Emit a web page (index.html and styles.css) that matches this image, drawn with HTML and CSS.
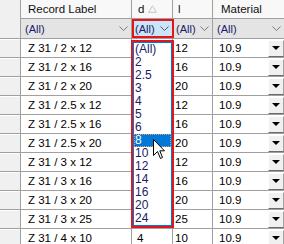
FILE: index.html
```html
<!DOCTYPE html>
<html>
<head>
<meta charset="utf-8">
<link rel="stylesheet" href="styles.css">
</head>
<body>
<div class="wrap">
  <div class="grid">
    <div class="corner"></div>
    <div class="hdr lbl">Record Label</div>
    <div class="hdr d">d <svg class="sort" width="9" height="8" viewBox="0 0 9 8"><path d="M4.5 0.8 L8.3 7.3 L0.7 7.3 Z" fill="none" stroke="#c4c4c4" stroke-width="1"/></svg></div>
    <div class="hdr l">l</div>
    <div class="hdr mat">Material</div>

    <div class="flt lbl"><span>(All)</span><svg class="chev" width="9" height="5" viewBox="0 0 9 5"><path d="M0.5 0.5 L4.5 4.5 L8.5 0.5" fill="none" stroke="#7a7a7a"/></svg></div>
    <div class="flt d active"><span>(All)</span><svg class="chev" width="9" height="5" viewBox="0 0 9 5"><path d="M0.5 0.5 L4.5 4.5 L8.5 0.5" fill="none" stroke="#5a5a5a"/></svg></div>
    <div class="flt l"><span>(All)</span><svg class="chev" width="9" height="5" viewBox="0 0 9 5"><path d="M0.5 0.5 L4.5 4.5 L8.5 0.5" fill="none" stroke="#7a7a7a"/></svg></div>
    <div class="flt mat"><span>(All)</span><svg class="chev" width="9" height="5" viewBox="0 0 9 5"><path d="M0.5 0.5 L4.5 4.5 L8.5 0.5" fill="none" stroke="#7a7a7a"/></svg></div>

    <div class="rh"></div><div class="c lbl">Z 31 / 2 x 12</div><div class="c d"></div><div class="c l">12</div><div class="c mat">10.9<span class="btn"><i></i></span></div>
    <div class="rh"></div><div class="c lbl">Z 31 / 2 x 16</div><div class="c d"></div><div class="c l">16</div><div class="c mat">10.9<span class="btn"><i></i></span></div>
    <div class="rh"></div><div class="c lbl">Z 31 / 2 x 20</div><div class="c d"></div><div class="c l">20</div><div class="c mat">10.9<span class="btn"><i></i></span></div>
    <div class="rh"></div><div class="c lbl">Z 31 / 2.5 x 12</div><div class="c d"></div><div class="c l">12</div><div class="c mat">10.9<span class="btn"><i></i></span></div>
    <div class="rh"></div><div class="c lbl">Z 31 / 2.5 x 16</div><div class="c d"></div><div class="c l">16</div><div class="c mat">10.9<span class="btn"><i></i></span></div>
    <div class="rh"></div><div class="c lbl">Z 31 / 2.5 x 20</div><div class="c d"></div><div class="c l">20</div><div class="c mat">10.9<span class="btn"><i></i></span></div>
    <div class="rh"></div><div class="c lbl">Z 31 / 3 x 12</div><div class="c d"></div><div class="c l">12</div><div class="c mat">10.9<span class="btn"><i></i></span></div>
    <div class="rh"></div><div class="c lbl">Z 31 / 3 x 16</div><div class="c d"></div><div class="c l">16</div><div class="c mat">10.9<span class="btn"><i></i></span></div>
    <div class="rh"></div><div class="c lbl">Z 31 / 3 x 20</div><div class="c d"></div><div class="c l">20</div><div class="c mat">10.9<span class="btn"><i></i></span></div>
    <div class="rh"></div><div class="c lbl">Z 31 / 3 x 25</div><div class="c d"></div><div class="c l">25</div><div class="c mat">10.9<span class="btn"><i></i></span></div>
    <div class="rh"></div><div class="c lbl">Z 31 / 4 x 10</div><div class="c d">4</div><div class="c l">10</div><div class="c mat">10.9<span class="btn"><i></i></span></div>
  </div>

  <div class="hilite"></div>

  <ul class="list">
    <li>(All)</li>
    <li>2</li>
    <li>2.5</li>
    <li>3</li>
    <li>4</li>
    <li>5</li>
    <li>6</li>
    <li class="sel">8</li>
    <li>10</li>
    <li>12</li>
    <li>14</li>
    <li>16</li>
    <li>20</li>
    <li>24</li>
  </ul>

  <svg class="cursor" width="13" height="21" viewBox="0 0 13 21"><path d="M0.5 0.5 L0.5 16.5 L4.5 12.5 L7.5 19.5 L9.5 18.5 L6.8 11.8 L11.5 11.8 Z" fill="#fff" stroke="#000" stroke-width="1" stroke-linejoin="miter"/></svg>
</div>
</body>
</html>
```

FILE: styles.css
```css
html, body {
  margin: 0;
  padding: 0;
  background: #ffffff;
  overflow: hidden;
}

.wrap {
  position: relative;
  width: 284px;
  height: 244px;
  overflow: hidden;
  font-family: "Liberation Sans", Arial, sans-serif;
  font-size: 11px;
  color: #000;
}

.grid {
  display: grid;
  grid-template-columns: 21px 111px 41px 40px 71px;
  grid-template-rows: 19px 20px repeat(11, 19px);
}

.grid > div {
  box-sizing: border-box;
  border-right: 1px solid #a0a0a0;
  border-bottom: 1px solid #a0a0a0;
  display: flex;
  align-items: center;
  white-space: nowrap;
  overflow: hidden;
}

.grid > .mat {
  border-right: none;
}

.corner {
  grid-row: span 2;
  background: #f0f0f0;
}

.rh {
  background: #f0f0f0;
  box-shadow: inset 0 1px 0 #ffffff;
}

.hdr {
  background: #f8f8f8;
  padding-left: 7px;
  font-size: 11.5px;
  color: #101010;
}

.hdr.d {
  padding-left: 6px;
  gap: 4px;
}

.hdr.l {
  padding-left: 5px;
}

.hdr.mat {
  padding-left: 8px;
}

.sort {
  margin-top: -1px;
}

.flt {
  background: #e4e4e4;
  padding-left: 4px;
  color: #1b1b66;
  justify-content: space-between;
}

.flt .chev {
  margin-right: 3px;
  flex: none;
}

.flt.d {
  padding-left: 3px;
}

.flt.active {
  background: #cce4f7;
}

.flt.l {
  padding-left: 3px;
}

.flt.mat {
  padding-left: 4px;
}

.c {
  background: #ffffff;
  font-size: 11.5px;
}

.c.lbl {
  padding-left: 7px;
}

.c.d {
  padding-left: 5px;
}

.c.l {
  padding-left: 2px;
}

.c.mat {
  padding-left: 6px;
  justify-content: space-between;
}

.btn {
  width: 16px;
  height: 17px;
  box-sizing: border-box;
  background: #f0f0f0;
  border-top: 1px solid #ffffff;
  border-left: 1px solid #ffffff;
  border-bottom: 1px solid #6b6b6b;
  border-right: 1px solid #a0a0a0;
  display: flex;
  align-items: center;
  justify-content: center;
  flex: none;
}

.btn i {
  width: 0;
  height: 0;
  border-left: 4px solid transparent;
  border-right: 4px solid transparent;
  border-top: 4px solid #000;
}

/* red highlight on the active filter cell */
.hilite {
  position: absolute;
  left: 132px;
  top: 19px;
  width: 42px;
  height: 19px;
  box-sizing: border-box;
  border: 2px solid #e3161c;
}

.list {
  position: absolute;
  left: 131px;
  top: 40px;
  width: 43px;
  height: 188px;
  box-sizing: border-box;
  margin: 0;
  list-style: none;
  background: #ffffff;
  border: 2px solid #e3161c;
  box-shadow: inset 0 0 0 1px #0078d7;
  padding: 1px;
  color: #1b1b66;
  font-size: 12px;
}

.list li {
  height: 13px;
  line-height: 13px;
  padding-left: 1px;
  box-sizing: border-box;
}

.list li.sel {
  background: #0078d7;
  color: #ffffff;
  outline: 1px dotted #f0a050;
  outline-offset: -1px;
}

.cursor {
  position: absolute;
  left: 153px;
  top: 139px;
}
```
